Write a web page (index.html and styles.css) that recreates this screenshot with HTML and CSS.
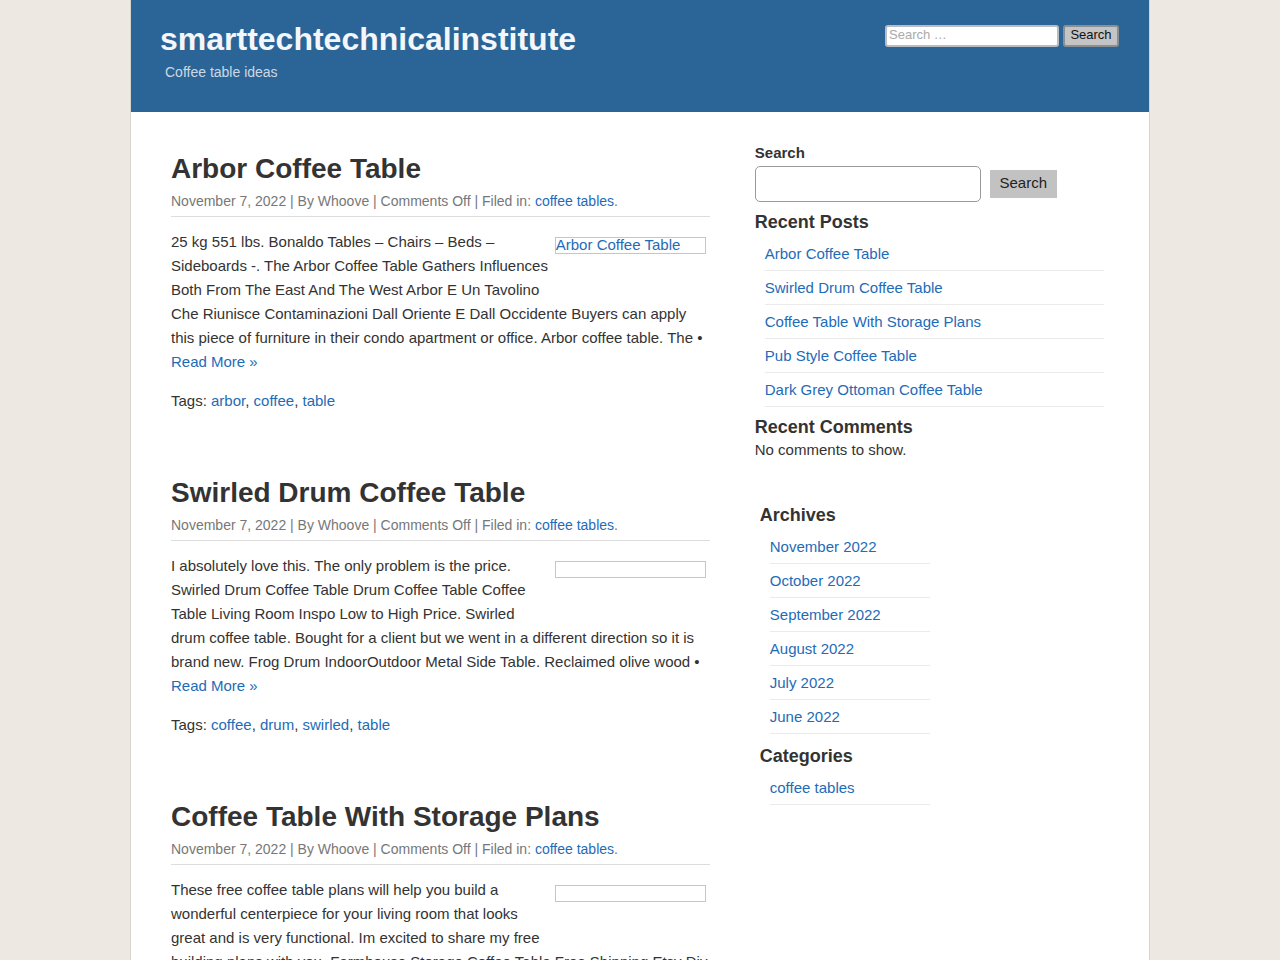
FILE: index.html
```html
<!DOCTYPE html>
<html lang="en">
<head>
    <meta charset="UTF-8">
    <meta name="viewport" content="width=device-width, initial-scale=1.0">
    <title>smarttechtechnicalinstitute</title>
    <link rel="stylesheet" href="styles.css">
</head>
<body>

    <div class="wrapper">
        <header class="site-header">
            <div class="branding">
                <h1 class="site-title">smarttechtechnicalinstitute</h1>
                <p class="site-description">Coffee table ideas</p>
            </div>
            <form class="header-search">
                <input type="search" placeholder="Search …">
                <button type="button">Search</button>
            </form>
        </header>

        <div class="site-content">
            <main class="posts">

                <article class="post">
                    <h2 class="post-title">Arbor Coffee Table</h2>
                    <div class="post-meta">November 7, 2022 | By Whoove | Comments Off | Filed in: <a href="#">coffee tables</a>.</div>
                    <div class="post-body">
                        <span class="thumb"><a href="#">Arbor Coffee Table</a></span>
                        <p>25 kg 551 lbs. Bonaldo Tables – Chairs – Beds – Sideboards -. The Arbor Coffee Table Gathers Influences Both From The East And The West Arbor E Un Tavolino Che Riunisce Contaminazioni Dall Oriente E Dall Occidente Buyers can apply this piece of furniture in their condo apartment or office. Arbor coffee table. The • <a href="#">Read More »</a></p>
                    </div>
                    <div class="post-tags">Tags: <a href="#">arbor</a>, <a href="#">coffee</a>, <a href="#">table</a></div>
                </article>

                <article class="post">
                    <h2 class="post-title">Swirled Drum Coffee Table</h2>
                    <div class="post-meta">November 7, 2022 | By Whoove | Comments Off | Filed in: <a href="#">coffee tables</a>.</div>
                    <div class="post-body">
                        <span class="thumb"></span>
                        <p>I absolutely love this. The only problem is the price. Swirled Drum Coffee Table Drum Coffee Table Coffee Table Living Room Inspo Low to High Price. Swirled drum coffee table. Bought for a client but we went in a different direction so it is brand new. Frog Drum IndoorOutdoor Metal Side Table. Reclaimed olive wood • <a href="#">Read More »</a></p>
                    </div>
                    <div class="post-tags">Tags: <a href="#">coffee</a>, <a href="#">drum</a>, <a href="#">swirled</a>, <a href="#">table</a></div>
                </article>

                <article class="post">
                    <h2 class="post-title">Coffee Table With Storage Plans</h2>
                    <div class="post-meta">November 7, 2022 | By Whoove | Comments Off | Filed in: <a href="#">coffee tables</a>.</div>
                    <div class="post-body">
                        <span class="thumb"></span>
                        <p>These free coffee table plans will help you build a wonderful centerpiece for your living room that looks great and is very functional. Im excited to share my free building plans with you. Farmhouse Storage Coffee Table Free Shipping Etsy Diy Coffee Table. Coffee table with storage plans. • <a href="#">Read More »</a></p>
                    </div>
                </article>

            </main>

            <aside class="sidebar">
                <section class="widget">
                    <label class="search-label">Search</label>
                    <div class="side-search">
                        <input type="search">
                        <button type="button">Search</button>
                    </div>
                </section>

                <section class="widget">
                    <h3 class="widget-title">Recent Posts</h3>
                    <ul class="link-list">
                        <li><a href="#">Arbor Coffee Table</a></li>
                        <li><a href="#">Swirled Drum Coffee Table</a></li>
                        <li><a href="#">Coffee Table With Storage Plans</a></li>
                        <li><a href="#">Pub Style Coffee Table</a></li>
                        <li><a href="#">Dark Grey Ottoman Coffee Table</a></li>
                    </ul>
                </section>

                <section class="widget">
                    <h3 class="widget-title">Recent Comments</h3>
                    <p class="no-comments">No comments to show.</p>
                </section>

                <section class="widget widget-narrow">
                    <h3 class="widget-title">Archives</h3>
                    <ul class="link-list">
                        <li><a href="#">November 2022</a></li>
                        <li><a href="#">October 2022</a></li>
                        <li><a href="#">September 2022</a></li>
                        <li><a href="#">August 2022</a></li>
                        <li><a href="#">July 2022</a></li>
                        <li><a href="#">June 2022</a></li>
                    </ul>

                    <h3 class="widget-title">Categories</h3>
                    <ul class="link-list">
                        <li><a href="#">coffee tables</a></li>
                    </ul>
                </section>
            </aside>
        </div>
    </div>

</body>
</html>
```

FILE: styles.css
```css
body {
    font-family: "Liberation Sans", Arial, sans-serif;
    background-color: #ede8e2;
    color: #333;
    margin: 0;
    padding: 0;
    font-size: 15px;
}

a {
    color: #1e6bb8;
    text-decoration: none;
}

.wrapper {
    width: 1020px;
    margin: 0 auto;
    background-color: #fff;
    border-left: 1px solid #d6d2cc;
    border-right: 1px solid #d6d2cc;
    min-height: 960px;
    box-sizing: border-box;
}

/* header */

.site-header {
    background-color: #2b6597;
    height: 112px;
    display: flex;
    justify-content: space-between;
    padding: 0 30px 0 29px;
}

.site-title {
    color: #f4f6f9;
    font-size: 32px;
    font-weight: 700;
    margin: 21px 0 0;
    line-height: 36px;
}

.site-description {
    color: #cdd8e4;
    font-size: 14px;
    margin: 7px 0 0 5px;
}

.header-search {
    display: flex;
    gap: 4px;
    margin-top: 25px;
    height: 22px;
}

.header-search input {
    width: 174px;
    height: 22px;
    box-sizing: border-box;
    border: 2px solid #b9bdc2;
    border-radius: 3px;
    padding: 0 2px 4px;
    font-family: inherit;
    font-size: 13px;
    outline: none;
}

.header-search input::placeholder {
    color: #aaa;
}

.header-search button {
    width: 56px;
    height: 22px;
    box-sizing: border-box;
    background-color: #c4c4c4;
    border: 2px solid #8a8f94;
    border-radius: 3px;
    font-family: inherit;
    font-size: 13px;
    color: #111;
    padding: 0 0 3px;
}

/* content */

.site-content {
    display: flex;
    gap: 45px;
    padding: 32px 45px 0 40px;
}

.posts {
    width: 540px;
    padding-top: 5px;
}

.post {
    margin-bottom: 60px;
}

.post-title {
    font-size: 28px;
    font-weight: 700;
    color: #333;
    margin: 0 0 2px;
    line-height: 40px;
}

.post-meta {
    color: #777;
    font-size: 14px;
    line-height: 20px;
    padding-bottom: 5px;
    border-bottom: 1px solid #ddd;
}

.post-body {
    margin-top: 13px;
    line-height: 24px;
}

.post-body p {
    margin: 0;
}

.thumb {
    float: right;
    width: 151px;
    height: 17px;
    box-sizing: border-box;
    border: 1px solid #c6c6c6;
    margin: 7px 4px 40px 2px;
    line-height: 13px;
    font-size: 15px;
}

.post-tags {
    margin-top: 15px;
    line-height: 24px;
}

/* sidebar */

.sidebar {
    width: 350px;
}

.search-label {
    display: block;
    font-weight: 700;
    font-size: 15px;
}

.side-search {
    display: flex;
    align-items: center;
    gap: 9px;
    margin-top: 5px;
}

.side-search input {
    width: 226px;
    height: 36px;
    box-sizing: border-box;
    border: 1px solid #999;
    border-radius: 5px;
    outline: none;
}

.side-search button {
    width: 67px;
    height: 28px;
    background-color: #c2c2c2;
    border: none;
    font-family: inherit;
    font-size: 15px;
    color: #222;
    padding: 0 0 4px;
}

.widget-title {
    font-size: 18px;
    font-weight: 700;
    margin: 9px 0 0;
    line-height: 22px;
}

.link-list {
    list-style: none;
    margin: 4px 0 0;
    padding: 0 0 0 10px;
}

.link-list li {
    border-bottom: 1px solid #eaeaea;
    line-height: 33px;
    font-size: 15px;
}

.no-comments {
    margin: 2px 0 0;
    line-height: 20px;
}

.widget-narrow {
    margin: 44px 0 0 5px;
    width: 170px;
}

.widget-narrow .widget-title {
    margin-top: 11px;
}
```
